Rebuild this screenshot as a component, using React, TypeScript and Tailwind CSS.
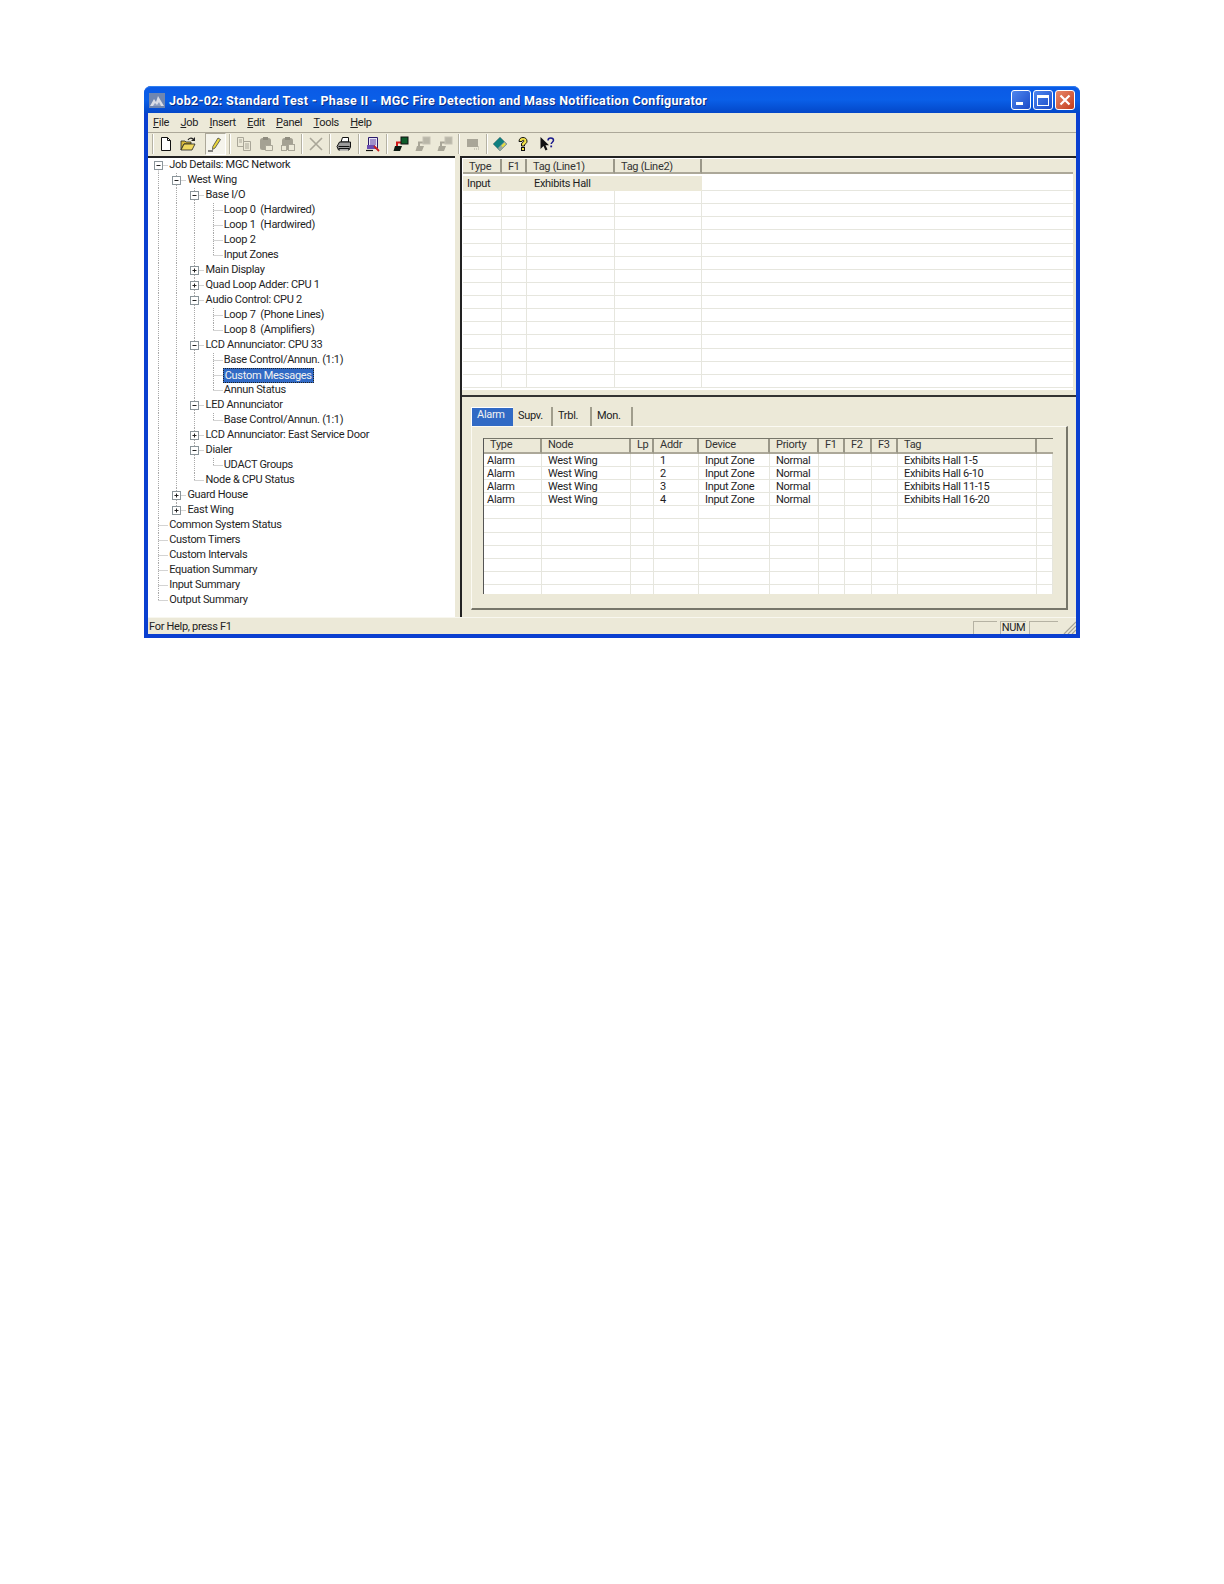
import React from "react";

type N = { t: string; plus?: boolean; c?: N[] };
const tree: N[] = [
  {
    t: "Job Details: MGC Network",
    c: [
      {
        t: "West Wing",
        c: [
          { t: "Base I/O", c: [{ t: "Loop 0  (Hardwired)" }, { t: "Loop 1  (Hardwired)" }, { t: "Loop 2" }, { t: "Input Zones" }] },
          { t: "Main Display", plus: true },
          { t: "Quad Loop Adder: CPU 1", plus: true },
          { t: "Audio Control: CPU 2", c: [{ t: "Loop 7  (Phone Lines)" }, { t: "Loop 8  (Amplifiers)" }] },
          { t: "LCD Annunciator: CPU 33", c: [{ t: "Base Control/Annun. (1:1)" }, { t: "Custom Messages" }, { t: "Annun Status" }] },
          { t: "LED Annunciator", c: [{ t: "Base Control/Annun. (1:1)" }] },
          { t: "LCD Annunciator: East Service Door", plus: true },
          { t: "Dialer", c: [{ t: "UDACT Groups" }] },
          { t: "Node & CPU Status" },
        ],
      },
      { t: "Guard House", plus: true },
      { t: "East Wing", plus: true },
    ],
  },
  { t: "Common System Status" },
  { t: "Custom Timers" },
  { t: "Custom Intervals" },
  { t: "Equation Summary" },
  { t: "Input Summary" },
  { t: "Output Summary" },
];

type Row = { t: string; prefix: boolean[]; last: boolean; first: boolean; box: "+" | "-" | null };
function flatten(nodes: N[], prefix: boolean[], out: Row[]) {
  nodes.forEach((n, i) => {
    const last = i === nodes.length - 1;
    out.push({ t: n.t, prefix, last, first: prefix.length === 0 && i === 0, box: n.plus ? "+" : n.c ? "-" : null });
    if (n.c) flatten(n.c, [...prefix, !last], out);
  });
  return out;
}
const rows = flatten(tree, [], []);

function Guide({ on }: { on: boolean }) {
  return (
    <svg width="18.2" height="15" viewBox="0 0 18.2 15" className="shrink-0">
      {on && <line x1="8.5" y1="0" x2="8.5" y2="15" stroke="#a8a8a8" strokeDasharray="1 1" />}
    </svg>
  );
}
function Glyph({ r }: { r: Row }) {
  return (
    <svg width="18.2" height="15" viewBox="0 0 18.2 15" className="shrink-0">
      <line x1="8.5" y1={r.first ? 7.5 : 0} x2="8.5" y2={r.last ? 7.5 : 15} stroke="#a8a8a8" strokeDasharray="1 1" />
      <line x1="8.5" y1="7.5" x2="18.2" y2="7.5" stroke="#a8a8a8" strokeDasharray="1 1" />
      {r.box && (
        <g>
          <rect x="4.5" y="3.5" width="8" height="8" fill="#fff" stroke="#8b959a" />
          <line x1="6.5" y1="7.5" x2="10.5" y2="7.5" stroke="#222" />
          {r.box === "+" && <line x1="8.5" y1="5.5" x2="8.5" y2="9.5" stroke="#222" />}
        </g>
      )}
    </svg>
  );
}

function Tree() {
  return (
    <div className="w-[307px] shrink-0 bg-white border-t-2 border-[#222] pl-[2px] overflow-hidden">
      {rows.map((r, i) => (
        <div key={i} className="flex h-[15px] items-center">
          {r.prefix.map((p, j) => (
            <Guide key={j} on={p} />
          ))}
          <Glyph r={r} />
          {r.t === "Custom Messages" ? (
            <span className="whitespace-pre h-[15px] leading-[13px] px-[1px] bg-[#316ac5] text-[#f2f2f2] border border-dotted border-[#222]">{r.t}</span>
          ) : (
            <span className="whitespace-pre pl-px">{r.t}</span>
          )}
        </div>
      ))}
    </div>
  );
}

function HeaderCell({ t, end, top }: { t: string; end?: boolean; top?: boolean }) {
  return (
    <div className={`h-full pl-[6px] border-b-2 border-b-[#aca899] bg-[#ece9d8] whitespace-pre overflow-hidden flex items-center text-[#333] ${end ? "" : "border-r-2 border-r-[#9a9788]"} ${top ? "pt-[3px]" : "pb-[1px]"}`}>
      {t}
    </div>
  );
}

function TopList() {
  const cols = "grid grid-cols-[39px_25px_88px_87px_1fr]";
  return (
    <div className="h-[239px] shrink-0 border-t-2 border-[#222] bg-[#ece9d8] overflow-hidden">
      <div className="h-[232px] mr-[3px] bg-white pl-px pt-px overflow-hidden">
        <div className={`${cols} h-[15px]`}>
          {["Type", "F1", "Tag (Line1)", "Tag (Line2)", ""].map((t, i) => (
            <HeaderCell key={i} t={t} end={i === 4} top />
          ))}
        </div>
        <div className={`${cols} h-[15px] mt-[2px] border-b border-[#e6e6de] leading-[15px]`}>
          <div className="bg-[#ece9d8] pl-[4px]">Input</div>
          <div className="bg-[#ece9d8]" />
          <div className="bg-[#ece9d8] pl-[7px]">Exhibits Hall</div>
          <div className="bg-[#ece9d8]" />
          <div />
        </div>
        {Array.from({ length: 15 }).map((_, i) => (
          <div key={i} className={`${cols} h-[13.13px] border-b border-[#e6e6de]`}>
            {[0, 1, 2, 3].map((c) => (
              <div key={c} className="border-r border-[#e6e6de]" />
            ))}
            <div />
          </div>
        ))}
      </div>
    </div>
  );
}

const lowerHead = ["Type", "Node", "Lp", "Addr", "Device", "Priorty", "F1", "F2", "F3", "Tag", ""];
const lowerRows = [
  ["Alarm", "West Wing", "", "1", "Input Zone", "Normal", "", "", "", "Exhibits Hall 1-5", ""],
  ["Alarm", "West Wing", "", "2", "Input Zone", "Normal", "", "", "", "Exhibits Hall 6-10", ""],
  ["Alarm", "West Wing", "", "3", "Input Zone", "Normal", "", "", "", "Exhibits Hall 11-15", ""],
  ["Alarm", "West Wing", "", "4", "Input Zone", "Normal", "", "", "", "Exhibits Hall 16-20", ""],
  ...Array.from({ length: 7 }).map(() => Array.from({ length: 11 }).map(() => "")),
];

function LowerList() {
  const cols = "grid grid-cols-[58px_89px_23px_45px_71px_49px_26px_27px_26px_139px_1fr]";
  return (
    <div className="w-[570px] h-[156px] border-l border-t border-l-[#555] border-t-[#77766a] bg-white overflow-hidden">
      <div className={`${cols} h-[15px]`}>
        {lowerHead.map((t, i) => (
          <HeaderCell key={i} t={t} end={i === 10} />
        ))}
      </div>
      {lowerRows.map((r, i) => (
        <div key={i} className={`${cols} h-[13.1px] border-b border-[#e6e6de] leading-[13px]`}>
          {r.map((t, c) => (
            <div key={c} className={`border-r border-[#e6e6de] whitespace-pre overflow-hidden ${c === 0 ? "pl-[3px]" : "pl-[6px]"}`}>
              {t}
            </div>
          ))}
        </div>
      ))}
    </div>
  );
}

function Lower() {
  const tabs = [
    { t: "Alarm", w: "w-[42px]" },
    { t: "Supv.", w: "w-[40px]" },
    { t: "Trbl.", w: "w-[39px]" },
    { t: "Mon.", w: "w-[41px]" },
  ];
  return (
    <div className="flex-1 border-t-2 border-[#333] pl-[9px] pt-[10px] bg-[#ece9d8]">
      <div className="flex h-[19px]">
        {tabs.map((t, i) => (
          <div
            key={t.t}
            className={`${t.w} pl-[5px] ${i === 0 ? "bg-[#316ac5] text-[#f2f2f2] border-t border-l border-white leading-[13px]" : "border-r-2 border-[#a09d8c] text-[#222] leading-[18px]"}`}
          >
            {t.t}
          </div>
        ))}
      </div>
      <div className="w-[597px] h-[184px] pt-[11px] pl-[11px] border-t border-l border-[#fbfaf3] border-r-2 border-b-2 border-r-[#77766a] border-b-[#77766a]">
        <LowerList />
      </div>
    </div>
  );
}

const G = "#a9a698";

function Sep({ w }: { w: string }) {
  return (
    <div className={`${w} h-[20px] flex justify-center shrink-0`}>
      <div className="w-[2px] h-full border-l border-l-[#b5b2a3] border-r border-r-white" />
    </div>
  );
}

function Btn({ w = "w-[22px]", pressed, children }: { w?: string; pressed?: boolean; children: React.ReactNode }) {
  return (
    <div className={`${w} h-[22px] shrink-0 flex items-center justify-center ${pressed ? "bg-[#f5f4ec] border border-t-[#aca899] border-l-[#aca899] border-r-white border-b-white" : ""}`}>
      {children}
    </div>
  );
}

const I = ({ children }: { children: React.ReactNode }) => (
  <svg width="16" height="16" viewBox="0 0 16 16">
    {children}
  </svg>
);

function Paste({ small }: { small?: boolean }) {
  return (
    <I>
      <rect x="2" y="2" width="11" height="12" rx="2.5" fill="#a4a193" />
      <rect x="5" y="1" width="5" height="3" fill="#8f8c7f" />
      {small ? <rect x="8.500" y="8.500" width="6" height="6" fill="#ece9d8" stroke={G} /> : <path d="M7.500 9.500h7v5h-7z" fill="#ece9d8" stroke={G} />}
      {small && <rect x="1.500" y="9.500" width="5" height="5" fill="#ece9d8" stroke={G} />}
    </I>
  );
}

function Link({ grey }: { grey?: boolean }) {
  const a = grey ? G : "#0b1a12";
  const b = grey ? "#b9b6a8" : "#0d5c2a";
  return (
    <I>
      <path d="M4 12V6.500h5" fill="none" stroke={grey ? G : "#d01818"} strokeWidth="2" />
      <rect x="8" y="1" width="7" height="7" fill={b} stroke={grey ? "#c5c2b4" : "#111"} />
      <path d="M0.500 15 2 10h7l-2 5z" fill={a} />
    </I>
  );
}

function Toolbar() {
  return (
    <div className="h-[24px] shrink-0 border-t border-t-[#aca899] flex items-center pl-[3px] pb-[2px]">
      <Sep w="w-[4px]" />
      <Btn>
        <I>
          <path d="M3.500 1.500h6l3 3v10h-9z" fill="#fff" stroke="#111" />
          <path d="M9.500 1.500v3h3" fill="none" stroke="#111" />
        </I>
      </Btn>
      <Btn>
        <I>
          <path d="M1 5h4l1 1h5v2H4l-3 6z" fill="#d8b93a" stroke="#222" strokeWidth="0.8" />
          <path d="M1 14 4 8h11l-3 6z" fill="#f0d860" stroke="#222" strokeWidth="0.8" />
          <path d="M8 4c1-2 3.500-2.500 5-1" fill="none" stroke="#222" strokeWidth="1.100" />
          <path d="M15 1v4h-4z" fill="#222" />
        </I>
      </Btn>
      <div className="w-[6px] shrink-0" />
      <Btn w="w-[21px]" pressed>
        <I>
          <path d="M10 2 12.500 3.500 7 12 4.500 13.500 4.800 10.500z" fill="#e9d63c" stroke="#444" strokeWidth="0.8" />
          <path d="M0 15h5" stroke="#111" />
        </I>
      </Btn>
      <Sep w="w-[7px]" />
      <Btn>
        <I>
          <path d="M1.500 1.500h6v9h-6z" fill="#ece9d8" stroke={G} />
          <path d="M7.500 5.500h7v9h-7z" fill="#ece9d8" stroke={G} />
          <path d="M9 8h4M9 10h4M9 12h4M3 4h3M3 6h3" stroke={G} />
        </I>
      </Btn>
      <Btn>
        <Paste />
      </Btn>
      <Btn>
        <Paste small />
      </Btn>
      <Sep w="w-[6px]" />
      <Btn>
        <I>
          <path d="M2 2 14 14M14 2 2 14" stroke={G} strokeWidth="1.600" />
        </I>
      </Btn>
      <Sep w="w-[6px]" />
      <Btn>
        <I>
          <path d="M5 6 6.500 1.500h6L12.500 6z" fill="#fff" stroke="#111" />
          <path d="M1 10.500 3.500 6h11v5l-1.500 3H2.500z" fill="#9c9c9c" stroke="#111" />
          <path d="M2.500 10.500h11M2.500 12.500h10.500" stroke="#111" />
          <path d="M4 14h8" stroke="#fff" />
        </I>
      </Btn>
      <Sep w="w-[7px]" />
      <Btn>
        <I>
          <path d="M3.500 1.500h9v11h-9z" fill="#e6e3f4" stroke="#2b1a6b" />
          <path d="M5 4h6M5 6h6M5 8h6" stroke="#5a3ca0" />
          <rect x="2" y="9" width="8" height="4" fill="#6a4cb0" />
          <path d="M1 14.500h7" stroke="#111" strokeWidth="1.200" />
          <path d="M9 10l5 5" stroke="#c81e1e" strokeWidth="1.800" />
        </I>
      </Btn>
      <Sep w="w-[6px]" />
      <Btn>
        <Link />
      </Btn>
      <Btn>
        <Link grey />
      </Btn>
      <Btn>
        <Link grey />
      </Btn>
      <Sep w="w-[6px]" />
      <Btn>
        <I>
          <rect x="2" y="3" width="11" height="8" fill={G} />
          <path d="M9 13h1M11 13h1M13 13h1M13 11h1" stroke={G} />
        </I>
      </Btn>
      <Sep w="w-[5px]" />
      <Btn>
        <I>
          <path d="M1 8 8 1l7 7-7 7z" fill="#0f7f7f" stroke="#7a8a88" strokeWidth="0.600" />
          <path d="M8 15l7-7-2.500-2.500L6 12z" fill="#9aa69c" />
          <path d="M10 10.500l3-3" stroke="#e8e23c" strokeWidth="2" />
        </I>
      </Btn>
      <div className="w-px shrink-0" />
      <Btn>
        <I>
          <path d="M4 5.500C4 2.800 5.800 1.500 8 1.500s4 1.300 4 3.700c0 2-1.500 2.700-2.500 3.500V10h-3V8c0-1.500 2.500-2 2.500-3 0-1-2-1-2 .5z" fill="#f3e34a" stroke="#111" />
          <rect x="6.500" y="11.500" width="3" height="3" fill="#f3e34a" stroke="#111" />
        </I>
      </Btn>
      <div className="w-[2px] shrink-0" />
      <Btn>
        <I>
          <path d="M1.500 1v12l3-3 2 4.500 2-1-2-4.200H10z" fill="#111" />
          <path d="M9 4.500C9 2.800 10.200 2 11.800 2s2.700.9 2.700 2.300c0 1.800-2.300 2-2.300 3.700" fill="none" stroke="#1a1a8c" strokeWidth="1.500" />
          <rect x="11.300" y="9.500" width="1.800" height="1.800" fill="#1a1a8c" />
        </I>
      </Btn>
    </div>
  );
}

function TitleBar() {
  return (
    <div className="h-[27px] shrink-0 rounded-t-[7px] bg-gradient-to-b from-[#0a5ae6] via-[#0a5fe8] to-[#0447c8] border-t border-t-[#2f7ff0] flex items-center pl-[5px] pr-[5px]">
      <svg width="16" height="15" viewBox="0 0 16 15" className="shrink-0">
        <rect width="16" height="15" fill="#6f86b0" />
        <path d="M1 13 5 6l2 3 2-6 3 5 3 5z" fill="#d9dde6" />
        <path d="M4 13l2-3 2 2 2-3 2 4z" fill="#8e9fbf" />
      </svg>
      <span className="ml-[4px] mt-[3px] flex-1 font-bold text-white text-[12.5px] tracking-[0.32px] whitespace-pre [text-shadow:1px_1px_0_#0a2a80]">
        Job2-02: Standard Test - Phase II - MGC Fire Detection and Mass Notification Configurator
      </span>
      <div className="flex gap-[2px]">
        <div className="w-[20px] h-[20px] rounded-[3px] border border-white bg-gradient-to-br from-[#4f86ee] to-[#1c49c8] flex items-end pl-[4px] pb-[4px]">
          <div className="w-[7px] h-[3px] bg-white" />
        </div>
        <div className="w-[20px] h-[20px] rounded-[3px] border border-white bg-gradient-to-br from-[#4f86ee] to-[#1c49c8] flex items-center justify-center">
          <div className="w-[12px] h-[11px] border border-white border-t-[3px]" />
        </div>
        <div className="w-[20px] h-[20px] rounded-[3px] border border-white bg-gradient-to-br from-[#e8886a] to-[#c23a18] flex items-center justify-center">
          <svg width="12" height="12" viewBox="0 0 12 12">
            <path d="M1.500 1.500l9 9M10.500 1.500l-9 9" stroke="#fff" strokeWidth="2.200" />
          </svg>
        </div>
      </div>
    </div>
  );
}

function Menu() {
  const items = ["File", "Job", "Insert", "Edit", "Panel", "Tools", "Help"];
  return (
    <div className="h-[19px] shrink-0 flex items-center gap-[11.4px] pl-[5px] pt-[2px] text-[#222]">
      {items.map((m) => (
        <span key={m}>
          <span className="underline">{m[0]}</span>
          {m.slice(1)}
        </span>
      ))}
    </div>
  );
}

function StatusBar() {
  return (
    <div className="h-[17px] shrink-0 border-t border-[#f8f7ef] flex items-center pl-px pt-[2px] leading-[14px] text-[#222]">
      <span className="flex-1">For Help, press F1</span>
      <div className="w-[24px] h-[13px] border-t border-l border-[#b5b2a3]" />
      <div className="w-[26px] h-[13px] ml-[3px] border-t border-l border-[#b5b2a3] text-center leading-[12px]">NUM</div>
      <div className="w-[29px] h-[13px] ml-[3px] border-t border-l border-[#b5b2a3]" />
      <svg width="18" height="14" viewBox="0 0 18 14" className="shrink-0 self-end">
        <path d="M6 14 18 2M10 14l8-8M14 14l4-4" stroke="#a5a295" strokeWidth="1.200" />
      </svg>
    </div>
  );
}

export default function App() {
  return (
    <div className="min-h-[1584px] bg-white pt-[86px] pl-[144px] font-['Roboto','Liberation_Sans',sans-serif] text-[11px] tracking-[-0.3px] text-[#1e1e1e]">
      <div className="w-[936px] h-[552px] flex flex-col rounded-t-[7px] bg-[#0a3fd0]">
        <TitleBar />
        <div className="flex-1 mx-[4px] mb-[4px] bg-[#ece9d8] flex flex-col min-h-0">
          <Menu />
          <Toolbar />
          <div className="flex flex-1 min-h-0">
            <Tree />
            <div className="w-[5px] shrink-0" />
            <div className="flex-1 flex flex-col border-l-2 border-[#222] min-w-0">
              <TopList />
              <Lower />
            </div>
          </div>
          <StatusBar />
        </div>
      </div>
    </div>
  );
}
